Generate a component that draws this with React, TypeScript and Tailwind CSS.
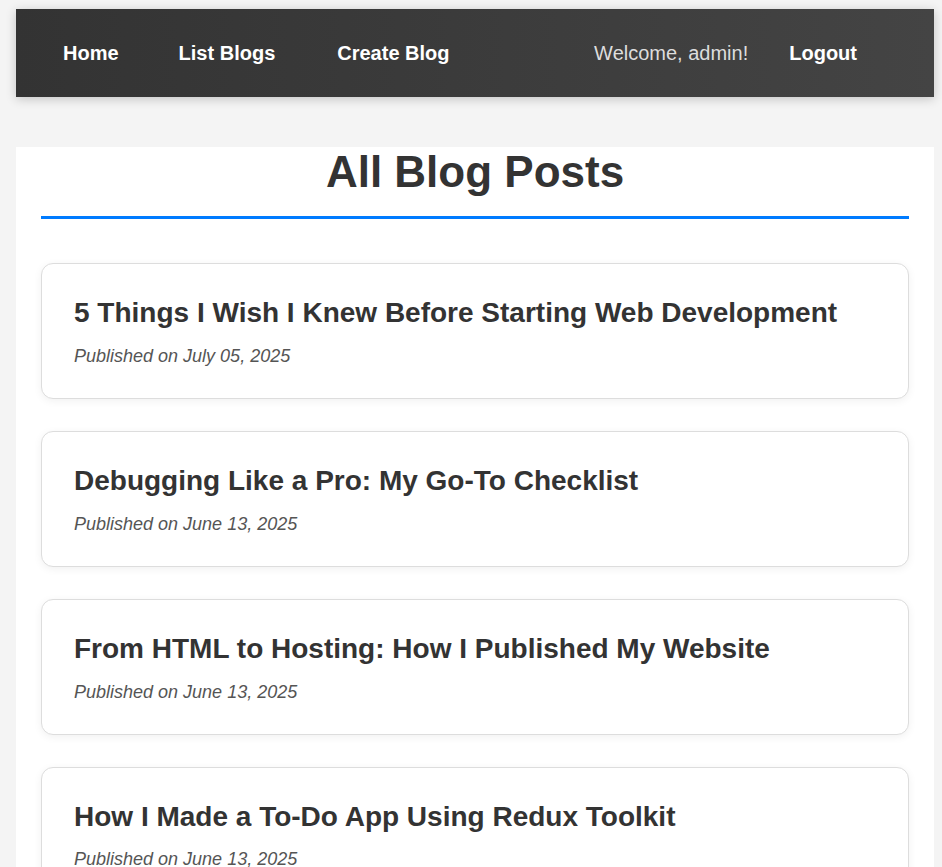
import React from "react";

const posts = [
  { title: "5 Things I Wish I Knew Before Starting Web Development", date: "July 05, 2025" },
  { title: "Debugging Like a Pro: My Go-To Checklist", date: "June 13, 2025" },
  { title: "From HTML to Hosting: How I Published My Website", date: "June 13, 2025" },
  { title: "How I Made a To-Do App Using Redux Toolkit", date: "June 13, 2025" },
  { title: "Understanding React Hooks: A Beginner's Guide", date: "June 13, 2025" },
];

export default function App() {
  return (
    <div
      className="min-h-screen bg-[#f4f4f4] pt-[9px] pb-10"
      style={{ fontFamily: '"Liberation Sans", Arial, sans-serif' }}
    >
      <nav className="ml-[16px] w-[918px] h-[88px] flex items-center bg-gradient-to-r from-[#333333] to-[#444444] shadow-[0_2px_10px_rgba(0,0,0,0.2)] pl-[47px] pr-[77px]">
        <a className="text-white font-bold text-[20px]">Home</a>
        <a className="text-white font-bold text-[20px] ml-[60px]">List Blogs</a>
        <a className="text-white font-bold text-[20px] ml-[62px]">Create Blog</a>
        <div className="ml-auto flex items-center">
          <span className="text-[#dddddd] text-[20px]">Welcome, admin!</span>
          <a className="text-white font-bold text-[20px] ml-[41px]">Logout</a>
        </div>
      </nav>
      <main className="ml-[16px] w-[918px] mt-[50px] bg-white px-[25px] pb-8">
        <h2 className="text-[44px] font-bold text-[#333333] text-center leading-[1.117] pb-[20px] border-b-[3px] border-[#007bff]">
          All Blog Posts
        </h2>
        <div className="mt-[44px] flex flex-col gap-[32px]">
          {posts.map((p) => (
            <div
              key={p.title}
              className="border border-[#dddddd] rounded-[12px] bg-white px-[32px] pt-[33px] pb-[32px] shadow-[0_2px_8px_rgba(0,0,0,0.06)]"
            >
              <h3 className="text-[28px] font-bold text-[#333333] leading-[1.117]">{p.title}</h3>
              <p className="italic text-[18px] text-[#555555] leading-[1.117] mt-[17.5px]">
                Published on {p.date}
              </p>
            </div>
          ))}
        </div>
      </main>
    </div>
  );
}
